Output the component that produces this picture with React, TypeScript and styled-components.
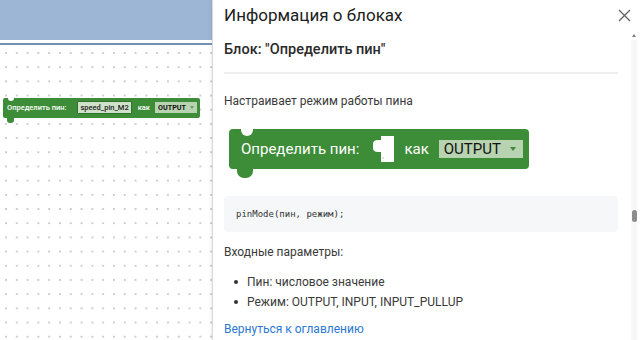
import React from 'react';
import styled, { createGlobalStyle, css } from 'styled-components';

const GlobalStyle = createGlobalStyle`
  html, body {
    margin: 0;
    padding: 0;
    background: #ffffff;
  }
  body {
    font-family: Roboto, "Liberation Sans", Arial, sans-serif;
  }
`;

const BLOCK_GREEN = '#3d8c37';

const Page = styled.div`
  display: flex;
  width: 640px;
  height: 340px;
  overflow: hidden;
`;

/* left workspace */
const Workspace = styled.div`
  display: flex;
  flex-direction: column;
  width: 212px;
  flex-shrink: 0;
`;

const TopBand = styled.div`
  height: 40px;
  background: #9db6d6;
`;

const BandLine = styled.div`
  height: 2px;
  margin-top: 3px;
  background: #7690b3;
`;

const Canvas = styled.div`
  flex: 1;
  padding: 50px 0 0 3px;
  background-color: #ffffff;
  background-image: radial-gradient(circle at 1px 1px, #cdcdcd 0.8px, transparent 1.3px);
  background-size: 10.8px 14.2px;
  background-position: 5px 7px;
`;

/* blockly-ish block */
const BlockShape = styled.div<{ $small?: boolean }>`
  position: relative;
  display: inline-flex;
  align-items: center;
  box-sizing: border-box;
  background: ${BLOCK_GREEN};
  color: #ffffff;
  height: 40px;
  padding: 0 6px 0 12px;
  gap: 10px;
  border-radius: 4px;

  &::before {
    content: '';
    position: absolute;
    top: 0;
    left: 12px;
    width: 12px;
    height: 7px;
    background: #ffffff;
    border-radius: 0 0 6px 6px;
  }
  &::after {
    content: '';
    position: absolute;
    top: 100%;
    left: 8px;
    width: 16px;
    height: 9px;
    background: ${BLOCK_GREEN};
    border-radius: 0 0 7px 7px;
  }

  ${(p) =>
    p.$small &&
    css`
      height: 20px;
      padding: 0 3px 0 4px;
      gap: 5px;
      border-radius: 2px;
      &::before {
        left: 5px;
        width: 6px;
        height: 3px;
        border-radius: 0 0 3px 3px;
      }
      &::after {
        left: 4px;
        width: 7px;
        height: 5px;
        border-radius: 0 0 3px 3px;
      }
    `}
`;

const BlockLabel = styled.span<{ $small?: boolean }>`
  font-size: ${(p) => (p.$small ? '7.5px' : '15px')};
  font-weight: ${(p) => (p.$small ? 500 : 400)};
  white-space: nowrap;
`;

const TextField = styled.span`
  display: inline-flex;
  align-items: center;
  height: 11px;
  padding: 0 2px;
  margin: 0 1px 0 6px;
  background: #cfe1c8;
  border: 1px solid #2f7329;
  border-radius: 1px;
  color: #1c1c1c;
  font-size: 7.5px;
  font-weight: 500;
`;

const Dropdown = styled.span<{ $small?: boolean }>`
  display: inline-flex;
  align-items: center;
  box-sizing: border-box;
  height: 18px;
  padding: 0 7px 0 5px;
  gap: 9px;
  background: #b7d3b0;
  color: #111111;
  font-size: 15px;
  ${(p) =>
    p.$small &&
    css`
      height: 11px;
      padding: 0 3px 0 3px;
      gap: 4px;
      font-size: 7.2px;
      font-weight: 700;
    `}
`;

const Caret = styled.span<{ $small?: boolean }>`
  width: 0;
  height: 0;
  border-left: ${(p) => (p.$small ? 2 : 3)}px solid transparent;
  border-right: ${(p) => (p.$small ? 2 : 3)}px solid transparent;
  border-top: ${(p) => (p.$small ? 3 : 4)}px solid ${(p) => (p.$small ? '#6d9a66' : '#3f8a39')};
`;

const SlotIcon = () => (
  <svg width="21" height="26" viewBox="0 0 21 26" style={{ marginLeft: 4 }}>
    <path
      d="M8 0 H21 V26 H8 V16 H5 Q0 16 0 12 V8 Q0 4 5 4 H8 Z"
      fill="#ffffff"
    />
    <circle cx="10" cy="22" r="0.8" fill="#bbbbbb" />
  </svg>
);

/* info panel */
const Panel = styled.div`
  flex: 1;
  display: flex;
  flex-direction: column;
  border-left: 1px solid #d6d9de;
  box-shadow: -1px 0 3px rgba(0, 0, 0, 0.08);
  background: #ffffff;
  color: #333333;
`;

const Header = styled.div`
  display: flex;
  align-items: center;
  justify-content: space-between;
  height: 30px;
  padding: 0 9px 0 11px;
`;

const Title = styled.h1`
  margin: 0;
  font-size: 17px;
  font-weight: 400;
  color: #212121;
`;

const CloseButton = styled.button`
  display: flex;
  align-items: center;
  justify-content: center;
  width: 14px;
  height: 14px;
  padding: 0;
  border: none;
  background: none;
  cursor: pointer;
`;

const Body = styled.div`
  flex: 1;
  display: flex;
  min-height: 0;
`;

const Content = styled.div`
  width: 394px;
  padding-left: 11px;
  display: flex;
  flex-direction: column;
  align-items: flex-start;
`;

const BlockName = styled.h2`
  margin: 10px 0 0;
  font-size: 14.5px;
  line-height: 20px;
  font-weight: 500;
  color: #2a2a2a;
`;

const Divider = styled.div`
  align-self: stretch;
  height: 2px;
  margin-top: 12px;
  background: #eeeeee;
`;

const Text = styled.p<{ $top: number }>`
  margin: ${(p) => p.$top}px 0 0;
  font-size: 12px;
  line-height: 16px;
  color: #3a3a3a;
`;

const BlockPreview = styled.div`
  margin: 20px 0 0 5px;
`;

const CodeBox = styled.pre`
  align-self: stretch;
  box-sizing: border-box;
  height: 36px;
  margin: 27px 0 0;
  padding: 0 12px;
  display: flex;
  align-items: center;
  background: #f6f7f9;
  border-radius: 4px;
  font-family: "DejaVu Sans Mono", "Liberation Mono", monospace;
  font-size: 9px;
  color: #333333;
`;

const ParamList = styled.ul`
  margin: 12px 0 0;
  padding: 0;
  list-style: none;
`;

const ParamItem = styled.li`
  display: flex;
  align-items: center;
  height: 20px;
  font-size: 12px;
  color: #3a3a3a;

  &::before {
    content: '';
    width: 4px;
    height: 4px;
    margin: 0 9px 0 10px;
    border-radius: 50%;
    background: #333333;
  }
`;

const BackLink = styled.a`
  margin-top: 9px;
  font-size: 12px;
  line-height: 16px;
  color: #2b78d3;
  text-decoration: none;
`;

const ScrollTrack = styled.div`
  width: 6px;
  margin-left: 13px;
  display: flex;
  flex-direction: column;
  align-items: center;
  background: linear-gradient(to bottom, transparent 10px, #f7f7f7 10px);
`;

const ScrollArrow = styled.div`
  margin-top: 4px;
  width: 0;
  height: 0;
  border-left: 2.5px solid transparent;
  border-right: 2.5px solid transparent;
  border-bottom: 3px solid #7a7a7a;
`;

const ScrollThumb = styled.div`
  margin-top: 173px;
  width: 5px;
  height: 12px;
  border-radius: 3px;
  background: #8c8c8c;
`;

export default function App() {
  return (
    <>
      <GlobalStyle />
      <Page>
        <Workspace>
          <TopBand />
          <BandLine />
          <Canvas>
            <BlockShape $small>
              <BlockLabel $small>Определить пин:</BlockLabel>
              <TextField>speed_pin_M2</TextField>
              <BlockLabel $small>как</BlockLabel>
              <Dropdown $small>
                OUTPUT <Caret $small />
              </Dropdown>
            </BlockShape>
          </Canvas>
        </Workspace>

        <Panel>
          <Header>
            <Title>Информация о блоках</Title>
            <CloseButton aria-label="close">
              <svg width="13" height="13" viewBox="0 0 13 13">
                <path d="M1 1 L12 12 M12 1 L1 12" stroke="#666666" strokeWidth="1.4" />
              </svg>
            </CloseButton>
          </Header>
          <Body>
            <Content>
              <BlockName>Блок: "Определить пин"</BlockName>
              <Divider />
              <Text $top={19}>Настраивает режим работы пина</Text>
              <BlockPreview>
                <BlockShape>
                  <BlockLabel>Определить пин:</BlockLabel>
                  <SlotIcon />
                  <BlockLabel>как</BlockLabel>
                  <Dropdown>
                    OUTPUT <Caret />
                  </Dropdown>
                </BlockShape>
              </BlockPreview>
              <CodeBox>pinMode(пин, режим);</CodeBox>
              <Text $top={12}>Входные параметры:</Text>
              <ParamList>
                <ParamItem>Пин: числовое значение</ParamItem>
                <ParamItem>Режим: OUTPUT, INPUT, INPUT_PULLUP</ParamItem>
              </ParamList>
              <BackLink href="#">Вернуться к оглавлению</BackLink>
            </Content>
            <ScrollTrack>
              <ScrollArrow />
              <ScrollThumb />
            </ScrollTrack>
          </Body>
        </Panel>
      </Page>
    </>
  );
}
